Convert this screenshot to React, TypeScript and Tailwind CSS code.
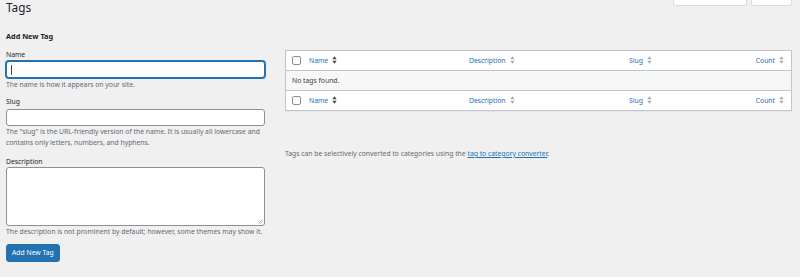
import React from "react";

const SortIcon = ({ dark }: { dark?: boolean }) => (
  <svg width="5" height="8" viewBox="0 0 5 8" className="inline-block ml-[4px] align-[-1px]">
    <path d="M2.5 0.3 L4.6 3.2 L0.4 3.2 Z" fill={dark ? "#3c434a" : "#a7aaad"} />
    <path d="M2.5 7.7 L4.6 4.8 L0.4 4.8 Z" fill={dark ? "#3c434a" : "#a7aaad"} />
  </svg>
);

const Checkbox = () => (
  <span className="block w-[9px] h-[9px] border border-[#8c8f94] rounded-[2px] bg-white" />
);

const HeaderRow = ({ top }: { top?: boolean }) => (
  <div className={`flex items-center h-[20px] bg-white ${top ? "border-b" : "border-t"} border-[#c3c4c7]`}>
    <div className="w-[23px] pl-[6px] flex items-center">
      <Checkbox />
    </div>
    <div className="w-[160px] text-[#2271b1]">
      Name
      <SortIcon dark />
    </div>
    <div className="w-[160px] text-[#2271b1]">
      Description
      <SortIcon />
    </div>
    <div className="w-[100px] text-[#2271b1]">
      Slug
      <SortIcon />
    </div>
    <div className="flex-1 text-right pr-[7px] text-[#2271b1]">
      Count
      <SortIcon />
    </div>
  </div>
);

export default function App() {
  return (
    <div
      className="w-[800px] h-[277px] overflow-hidden bg-[#f0f0f1] text-[#3c434a] text-[6.8px] leading-[11px]"
      style={{ fontFamily: '"Noto Sans", "Open Sans", sans-serif' }}
    >
      <div className="flex justify-between items-start pl-[6px] pr-[8px]">
        <h1 className="text-[11.8px] leading-[15px] text-[#1d2327] font-normal mt-[0px]">Tags</h1>
        <div className="flex gap-[4px]">
          <div className="w-[74px] h-[6px] bg-white border border-t-0 border-[#dcdcde] rounded-b-[3px]" />
          <div className="w-[41px] h-[6px] bg-white border border-t-0 border-[#dcdcde] rounded-b-[3px]" />
        </div>
      </div>
      <div className="flex pl-[6px] pr-[8px] mt-[16px]">
        <div className="w-[259px] shrink-0">
          <h2 className="text-[7.3px] leading-[10px] font-bold text-[#1d2327]">Add New Tag</h2>
          <div className="mt-[9px] text-[#1d2327] leading-[10px]">Name</div>
          <div className="mt-[1px] h-[17px] bg-white border border-[#2271b1] shadow-[0_0_0_1px_#2271b1] rounded-[3px] flex items-center pl-[4px]">
            <span className="block w-[1px] h-[10px] bg-[#3c434a]" />
          </div>
          <p className="mt-[1px] text-[#646970]">The name is how it appears on your site.</p>
          <div className="mt-[7px] text-[#1d2327] leading-[10px]">Slug</div>
          <div className="mt-[2px] h-[17px] bg-white border border-[#8c8f94] rounded-[3px]" />
          <p className="mt-[0px] text-[#646970]">
            The &quot;slug&quot; is the URL-friendly version of the name. It is usually all lowercase and contains only
            letters, numbers, and hyphens.
          </p>
          <div className="mt-[9px] text-[#1d2327] leading-[10px]">Description</div>
          <div className="mt-[0px] h-[59px] bg-white border border-[#8c8f94] rounded-[3px] relative">
            <svg width="5" height="5" viewBox="0 0 5 5" className="absolute right-[1px] bottom-[1px]">
              <path d="M4.5 0.5 L0.5 4.5 M4.5 2.5 L2.5 4.5" stroke="#8c8f94" strokeWidth="0.7" />
            </svg>
          </div>
          <p className="mt-[0px] text-[#646970]">
            The description is not prominent by default; however, some themes may show it.
          </p>
          <button className="mt-[7px] h-[18px] px-[5px] bg-[#2271b1] border border-[#2271b1] rounded-[3px] text-white leading-[16px]">
            Add New Tag
          </button>
        </div>
        <div className="flex-1 ml-[20px] pt-[19px]">
          <div className="border border-[#c3c4c7] shadow-[0_1px_1px_rgba(0,0,0,0.04)]">
            <HeaderRow top />
            <div className="h-[19px] bg-[#f6f7f7] flex items-center pl-[6px]">No tags found.</div>
            <HeaderRow />
          </div>
          <p className="mt-[37px] text-[#646970]">
            Tags can be selectively converted to categories using the{" "}
            <a className="text-[#2271b1] underline">tag to category converter</a>.
          </p>
        </div>
      </div>
    </div>
  );
}
